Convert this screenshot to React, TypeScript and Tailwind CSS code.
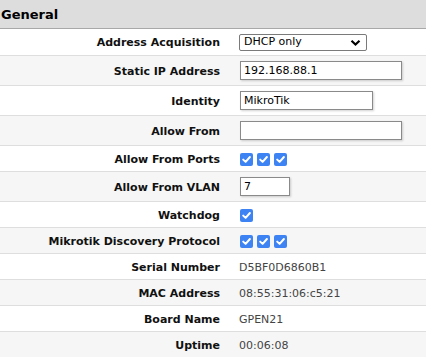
import React from "react";

const font = { fontFamily: '"DejaVu Sans", Verdana, sans-serif' };

function Check() {
  return (
    <span className="inline-flex h-[13px] w-[13px] items-center justify-center rounded-[2px] bg-[#3d83f3]">
      <svg width="11" height="11" viewBox="0 0 11 11">
        <path d="M2.2 5.6 L4.6 7.9 L8.9 3" fill="none" stroke="white" strokeWidth="2" strokeLinecap="round" strokeLinejoin="round" />
      </svg>
    </span>
  );
}

function Row({ label, h, gray, children }: { label: string; h: string; gray?: boolean; children: React.ReactNode }) {
  return (
    <div className={`grid grid-cols-[229px_1fr] border-b border-[#dedede] ${h} ${gray ? "bg-[#f6f6f6]" : "bg-white"}`}>
      <div className="flex items-center justify-end pr-[9px] pt-[3px] text-[11px] font-bold text-[#111]">{label}</div>
      <div className="flex items-center pl-[10px] text-[11px] text-[#444]">{children}</div>
    </div>
  );
}

function Val({ children }: { children: React.ReactNode }) {
  return <span className="pt-[3px]">{children}</span>;
}

function TextBox({ value, w }: { value: string; w: string }) {
  return (
    <div className={`ml-px flex h-[19px] ${w} items-center border border-[#8a8a8a] bg-white pl-[3px] pt-px text-[11px] text-black shadow-[1px_1px_2px_rgba(0,0,0,0.18)]`}>
      {value}
    </div>
  );
}

export default function App() {
  return (
    <div className="w-[426px] h-[357px] overflow-hidden bg-white" style={font}>
      <div className="flex h-[29px] items-center border-b border-[#a8a8a8] bg-[#dddddd] pl-px pt-[2px] text-[13px] font-bold text-black">
        General
      </div>
      <Row label="Address Acquisition" h="h-[27px]">
        <div className="flex h-[17px] w-[128px] items-center justify-between rounded-[2px] border border-[#7a7a7a] bg-white pl-[4px] pr-[5px] pt-px text-[11px] text-black">
          <span>DHCP only</span>
          <svg width="11" height="8" viewBox="0 0 11 8">
            <path d="M1.5 1.8 L5.5 5.6 L9.5 1.8" fill="none" stroke="black" strokeWidth="2.2" />
          </svg>
        </div>
      </Row>
      <Row label="Static IP Address" h="h-[30px]" gray>
        <TextBox value="192.168.88.1" w="w-[162px]" />
      </Row>
      <Row label="Identity" h="h-[30px]">
        <TextBox value="MikroTik" w="w-[133px]" />
      </Row>
      <Row label="Allow From" h="h-[30px]" gray>
        <TextBox value="" w="w-[162px]" />
      </Row>
      <Row label="Allow From Ports" h="h-[26px]">
        <div className="ml-px flex gap-[4px] pt-px">
          <Check />
          <Check />
          <Check />
        </div>
      </Row>
      <Row label="Allow From VLAN" h="h-[30px]" gray>
        <TextBox value="7" w="w-[50px]" />
      </Row>
      <Row label="Watchdog" h="h-[26px]">
        <div className="ml-px flex pt-px">
          <Check />
        </div>
      </Row>
      <Row label="Mikrotik Discovery Protocol" h="h-[26px]" gray>
        <div className="ml-px flex gap-[4px] pt-px">
          <Check />
          <Check />
          <Check />
        </div>
      </Row>
      <Row label="Serial Number" h="h-[26px]">
        <Val>D5BF0D6860B1</Val>
      </Row>
      <Row label="MAC Address" h="h-[26px]" gray>
        <Val>08:55:31:06:c5:21</Val>
      </Row>
      <Row label="Board Name" h="h-[26px]">
        <Val>GPEN21</Val>
      </Row>
      <Row label="Uptime" h="h-[26px]" gray>
        <Val>00:06:08</Val>
      </Row>
    </div>
  );
}
